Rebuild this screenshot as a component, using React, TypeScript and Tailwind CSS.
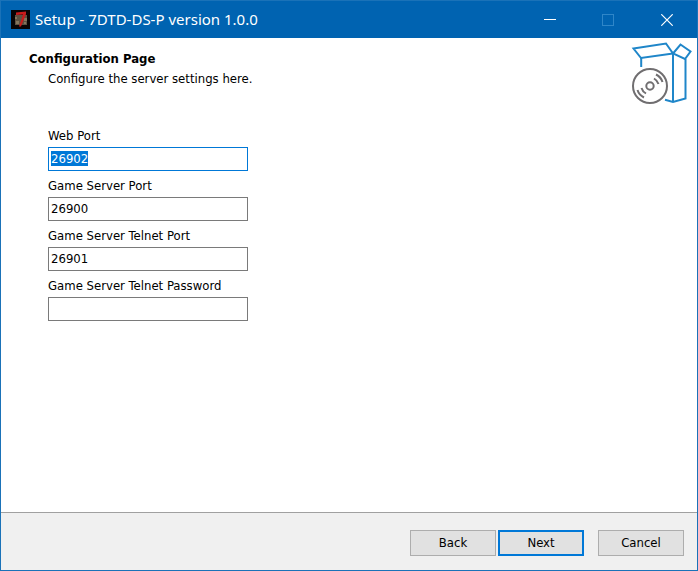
import { useEffect, useRef, useState } from 'react';

type Field = { id: string; label: string; value: string };

const initialFields: Field[] = [
  { id: 'web-port', label: 'Web Port', value: '26902' },
  { id: 'game-port', label: 'Game Server Port', value: '26900' },
  { id: 'telnet-port', label: 'Game Server Telnet Port', value: '26901' },
  { id: 'telnet-password', label: 'Game Server Telnet Password', value: '' },
];

function AppIcon() {
  return (
    <svg viewBox="0 0 19 19" className="h-[19px] w-[19px] shrink-0" aria-hidden="true">
      <rect width="19" height="19" fill="#080405" />
      <rect x="4" y="5" width="12" height="10" fill="#5d5141" />
      <path d="M4 7h2v2H4zM5 11h3v3H5zM13 8h3v3h-3zM13 12h2v2h-2z" fill="#85745c" />
      <path d="M5 2.500 15 1.500v2.500L10 16.500H8L12 4.500 5 5z" fill="#c81c1c" />
    </svg>
  );
}

function TitleBar() {
  return (
    <header className="flex h-[37px] items-center bg-[#0063b1] pl-[10px] text-white">
      <AppIcon />
      <h1 className="ml-[5px] flex-1 whitespace-nowrap pb-[2px] font-['Noto_Sans','Open_Sans',sans-serif] text-[15px] leading-5">
        Setup - 7DTD-DS-P version 1.0.0
      </h1>
      <button type="button" aria-label="Minimize" className="flex h-full w-[58px] items-center justify-center">
        <svg viewBox="0 0 12 12" className="h-3 w-3" shapeRendering="crispEdges">
          <path d="M0 5.5h12" stroke="currentColor" />
        </svg>
      </button>
      <button type="button" aria-label="Maximize" disabled className="flex h-full w-[58px] items-center justify-center text-[#2f86c8]">
        <svg viewBox="0 0 12 12" className="h-3 w-3" fill="none" shapeRendering="crispEdges">
          <rect x="0.5" y="0.5" width="11" height="11" stroke="currentColor" />
        </svg>
      </button>
      <button type="button" aria-label="Close" className="flex h-full w-[60px] items-center justify-center">
        <svg viewBox="0 0 12 12" className="h-3 w-3">
          <path d="m.3.3 11.4 11.4M11.7.3.3 11.7" stroke="currentColor" strokeWidth="1.2" />
        </svg>
      </button>
    </header>
  );
}

function SetupIcon() {
  return (
    <svg viewBox="0 0 62 64" className="h-16 w-[62px] shrink-0" fill="none" aria-hidden="true">
      <g stroke="#1f86c9" strokeWidth="2" strokeLinejoin="miter">
        <path d="M3.500 6.500 36 1.500 43 11.500 11 16Z" />
        <path d="M43 11.500 50.500 2.500 60.500 9.500 55 17Z" />
        <path d="M11.200 16v9M43 11.500V60M55.500 17v39.500L43 60l-8-2.200" />
      </g>
      <g stroke="#706e70" strokeWidth="2">
        <circle cx="20" cy="44" r="17" />
        <circle cx="20" cy="44" r="3.700" />
        <path d="M24 36.500Q27.500 38.500 28.500 42M26 32.500Q31 35 32.500 40M16 51.500Q12.500 49.500 11.500 46M14 55.500Q9 53 7.500 48" />
      </g>
    </svg>
  );
}

const buttonBase = 'h-[26px] w-[86px] bg-[#e1e1e1] leading-4';

export default function App() {
  const [fields, setFields] = useState(initialFields);
  const firstInput = useRef<HTMLInputElement>(null);

  useEffect(() => {
    firstInput.current?.focus();
    firstInput.current?.select();
  }, []);

  const update = (id: string, value: string) =>
    setFields((all) => all.map((f) => (f.id === id ? { ...f, value } : f)));

  return (
    <div className="flex min-h-screen flex-col border border-[#1a72b8] bg-white font-['DejaVu_Sans_Condensed','DejaVu_Sans',sans-serif] text-[13px] leading-4 text-black">
      <TitleBar />
      <main className="flex flex-1 flex-col">
        <div className="flex items-start justify-between pt-1 pr-[5px] pl-7">
          <div className="pt-[9px]">
            <h2 className="font-bold">Configuration Page</h2>
            <p className="mt-1 pl-[19px]">Configure the server settings here.</p>
          </div>
          <SetupIcon />
        </div>
        <form className="flex flex-col gap-[7px] pt-[22px] pl-[47px]">
          {fields.map((field, i) => (
            <div key={field.id} className="flex flex-col gap-[3px]">
              <label htmlFor={field.id} className="self-start">
                {field.label}
              </label>
              <input
                id={field.id}
                ref={i === 0 ? firstInput : undefined}
                value={field.value}
                onChange={(e) => update(field.id, e.target.value)}
                className="h-6 w-[200px] border border-[#7a7a7a] px-[2px] pb-[2px] leading-4 outline-none selection:bg-[#0078d7] selection:text-white focus:border-[#0078d7]"
              />
            </div>
          ))}
        </form>
      </main>
      <footer className="flex justify-end border-t border-[#a0a0a0] bg-[#f0f0f0] pt-[17px] pr-[13px] pb-[14px]">
        <button type="button" className={`${buttonBase} mr-[2px] border border-[#adadad]`}>
          Back
        </button>
        <button type="button" className={`${buttonBase} mr-[14px] border-2 border-[#0078d7]`}>
          Next
        </button>
        <button type="button" className={`${buttonBase} border border-[#adadad]`}>
          Cancel
        </button>
      </footer>
    </div>
  );
}
